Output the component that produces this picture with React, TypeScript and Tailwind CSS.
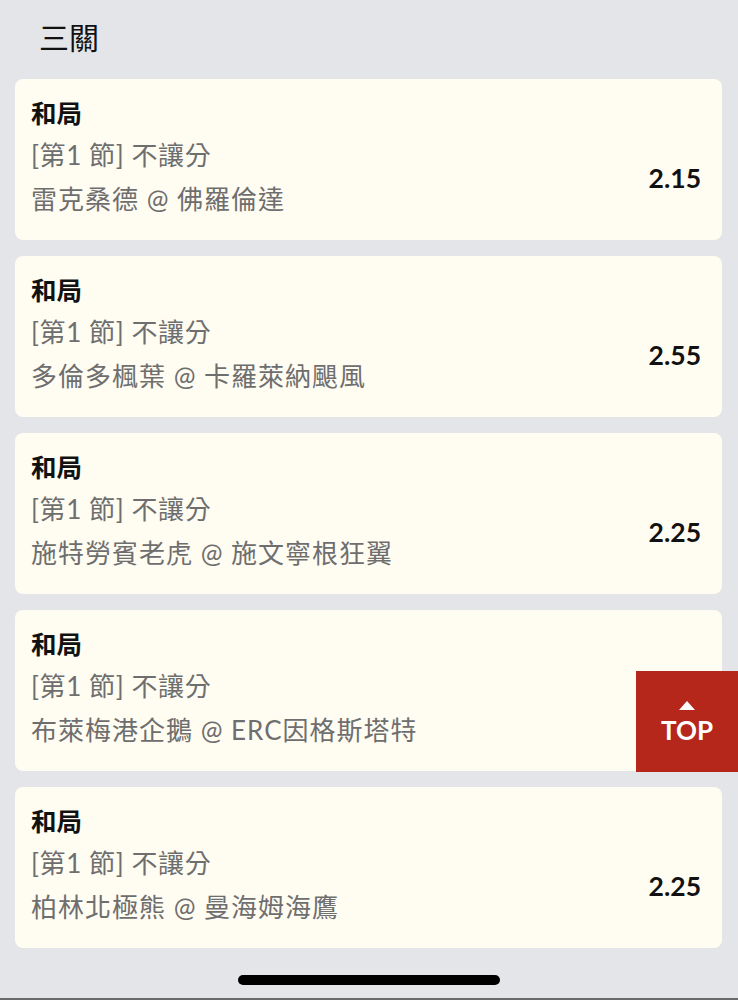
const bets = [
  { match: "雷克桑德 @ 佛羅倫達", odds: "2.15" },
  { match: "多倫多楓葉 @ 卡羅萊納颶風", odds: "2.55" },
  { match: "施特勞賓老虎 @ 施文寧根狂翼", odds: "2.25" },
  { match: "布萊梅港企鵝 @ ERC因格斯塔特", odds: "2.25" },
  { match: "柏林北極熊 @ 曼海姆海鷹", odds: "2.25" },
];

const font = { fontFamily: "Lato, 'Noto Sans CJK TC', sans-serif" };

export default function App() {
  return (
    <div className="relative h-[1000px] w-[738px] overflow-hidden bg-[#e4e5e8]" style={font}>
      <div className="flex h-[79px] items-center pl-[39px] pb-[4px] text-[30px] text-[#111]">三關</div>

      <div className="flex flex-col gap-[16px] px-[15px] pr-[16px]">
        {bets.map((b, i) => (
          <div key={i} className="h-[161px] rounded-[8px] bg-[#fffcf2] pl-[16px] pr-[21px] pt-[14px]">
            <div className="flex h-[40px] items-center text-[25.5px] font-bold text-[#111]">和局</div>
            <div className="flex items-center justify-between">
              <div className="text-[26px] text-[#6e6e6e]">
                <div className="flex h-[44px] items-center tracking-[0.6px]">[第1 節] 不讓分</div>
                <div className="flex h-[44px] items-center tracking-[1px]">{b.match}</div>
              </div>
              <div className="pt-[4px] text-[26.5px] font-bold text-[#111]">{b.odds}</div>
            </div>
          </div>
        ))}
      </div>

      {/* back-to-top */}
      <button className="absolute left-[636px] top-[671px] flex h-[101px] w-[102px] flex-col items-center justify-center bg-[#b5261b] text-white">
        <svg width="16" height="9" viewBox="0 0 16 9" className="mb-[7px]">
          <path d="M8 0 L16 9 L0 9 Z" fill="white" />
        </svg>
        <span className="text-[26px] font-bold leading-none">TOP</span>
      </button>

      <div className="absolute left-[238px] top-[975px] h-[10px] w-[262px] rounded-full bg-black" />
      <div className="absolute bottom-0 left-0 h-[2px] w-full bg-[#6b6b6b]" />
    </div>
  );
}
